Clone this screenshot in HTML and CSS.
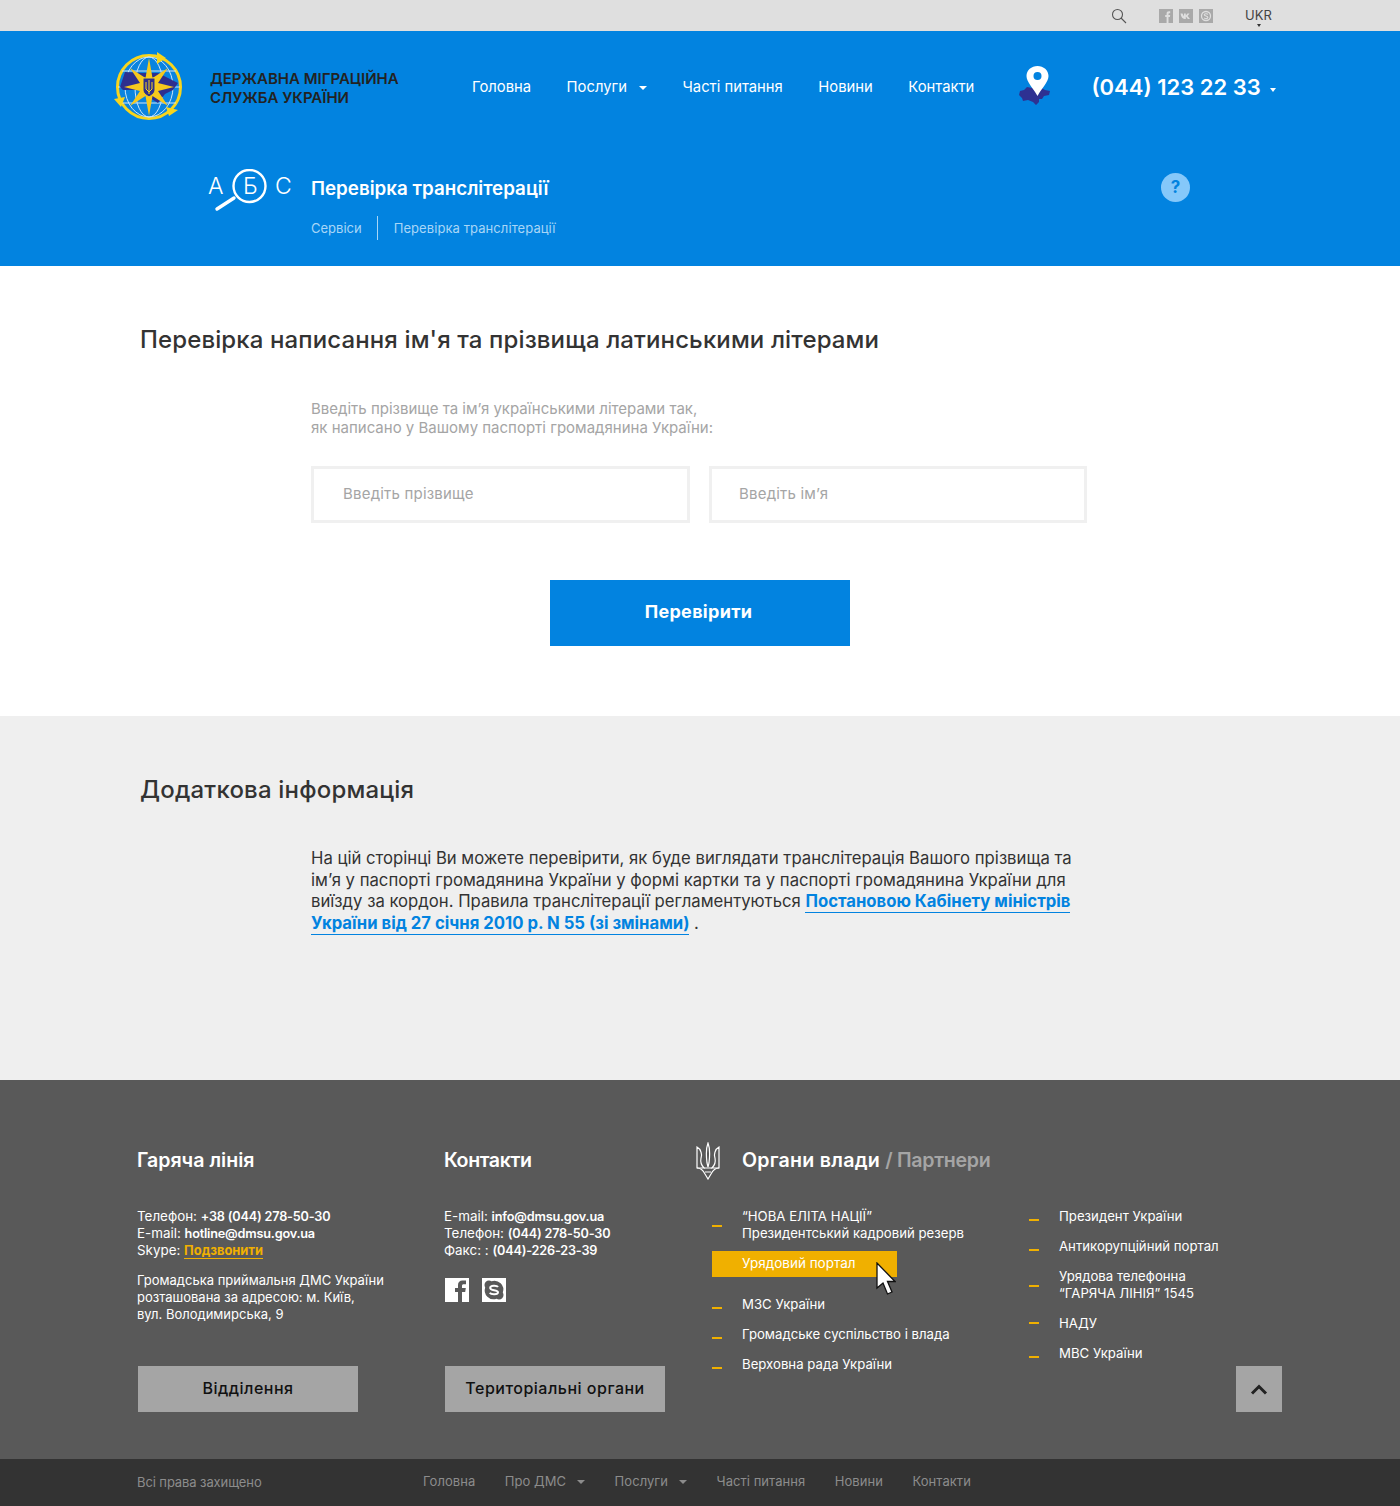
FILE: index.html
```html
<!DOCTYPE html>
<html lang="uk">

<head>
    <meta charset="UTF-8">
    <meta name="viewport" content="width=device-width, initial-scale=1.0">
    <title>Перевірка транслітерації</title>
    <link rel="stylesheet" href="styles.css">
</head>

<body>
    <div class="topbar">
        <svg class="top-search" width="16" height="16" viewBox="0 0 16 16"><circle cx="6.5" cy="6.5" r="5" fill="none" stroke="#555" stroke-width="1.1"/><path d="M10 10l5 5" stroke="#555" stroke-width="1.1"/></svg>
        <div class="top-social">
            <svg width="14" height="14" viewBox="0 0 14 14"><rect width="14" height="14" fill="#a9a9a9"/><path d="M7.6 14V8h-1.4V6h1.4V4.6C7.6 3 8.5 2.2 10 2.2h1.2v2H10.300c-.6 0-.8.300-.8.800V6h1.700l-.3 2H9.500v6z" fill="#dfdfdf"/></svg>
            <svg width="14" height="14" viewBox="0 0 14 14"><rect width="14" height="14" fill="#a9a9a9"/><path d="M1.500 4.500h2l1.500 3V4.500h1.800v2l1.700-2h2L8.600 7l2.400 3H8.900L6.800 7.600V10H5.500C3.500 10 2 7.500 1.500 4.500z" fill="#dfdfdf"/></svg>
            <svg width="14" height="14" viewBox="0 0 14 14"><rect width="14" height="14" fill="#a9a9a9"/><circle cx="7" cy="7" r="4.500" fill="none" stroke="#dfdfdf" stroke-width="1.300"/><path d="M9 5.300C8.300 4.500 5.200 4.500 5.200 5.800S8.900 7 8.900 8.400 5.700 9.700 5 8.700" fill="none" stroke="#dfdfdf" stroke-width="1.100"/></svg>
        </div>
        <div class="top-lang">UKR<span class="lang-caret"></span></div>
    </div>

    <header class="head">
        <div class="head-main">
            <svg class="logo" width="70" height="70" viewBox="0 0 70 70">
                <circle cx="35" cy="35" r="31.500" fill="#0a84e0" stroke="#f7d51d" stroke-width="3"/>
                <g fill="none" stroke="#cfe6f8" stroke-width="1">
                    <ellipse cx="35" cy="35" rx="14" ry="30"/>
                    <ellipse cx="35" cy="35" rx="24" ry="30"/>
                    <path d="M8 19h54M4 35h62M8 51h54"/>
                </g>
                <path d="M6 35l5-15 17 1 16 0 20 10-5 7-8 4-7 9-8-5-10-8-17 0z" fill="#2e2f8e"/>
                <path d="M35 6l3.500 20L54 16 44 31l16 4-16 4 10 15-15.500-10L35 64l-3.500-20L16 54l10-15-16-4 16-4-10-15 15.500 10z" fill="#f7c91d"/>
                <path d="M29 26h12v12c0 3-3 5-6 7-3-2-6-4-6-7z" fill="#2e2f8e" stroke="#f7d51d"/>
                <path d="M35 28v14M32 30v7l3 3 3-3v-7" fill="none" stroke="#f7d51d" stroke-width="1"/>
                <path d="M43 0l9 6-9 6zM0 47l11-2-4 10zM52 55l12 3-9 6z" fill="#f7d51d"/>
            </svg>
            <div class="brand">ДЕРЖАВНА МІГРАЦІЙНА<br>СЛУЖБА УКРАЇНИ</div>
            <nav class="nav">
                <a>Головна</a>
                <a>Послуги<span class="caret"></span></a>
                <a>Часті питання</a>
                <a>Новини</a>
                <a>Контакти</a>
            </nav>
            <svg class="map-pin" width="34" height="40" viewBox="0 0 34 40">
                <path d="M1 25l4-1 3-3 5 1 8-1 5 3 5 1-1 4-5 1-2 3-3 0 0 3-3 3-3-3-5-2-5 1-1-3-3-3z" fill="#2e3192"/>
                <path d="M18.500 0C12.500 0 7.500 4.300 7.500 10c0 6 6.500 12 11 20C23 22 29.500 16 29.500 10 29.500 4.300 24.500 0 18.500 0z" fill="#fff"/>
                <circle cx="18.500" cy="10" r="4" fill="#0283e0"/>
            </svg>
            <div class="phone">(044) 123 22 33<span class="caret"></span></div>
        </div>
        <div class="head-sub">
            <svg class="abc" width="84" height="44" viewBox="0 0 84 44">
                <circle cx="41.500" cy="17" r="16" fill="none" stroke="#fff" stroke-width="2.400"/>
                <path d="M26 29L9 40" stroke="#fff" stroke-width="3.400" stroke-linecap="round"/>
                <text class="abc-letter" x="0" y="25">А</text>
                <text class="abc-letter" x="35" y="25">Б</text>
                <text class="abc-letter" x="67" y="25">С</text>
            </svg>
            <div class="page-title">
                <h1>Перевірка транслітерації</h1>
                <div class="crumbs"><a>Сервіси</a><a class="crumb-last">Перевірка транслітерації</a></div>
            </div>
            <div class="help">?</div>
        </div>
    </header>

    <section class="check">
        <h2>Перевірка написання ім'я та прізвища латинськими літерами</h2>
        <p class="hint">Введіть прізвище та ім’я українськими літерами так,<br>як написано у Вашому паспорті громадянина України:</p>
        <div class="fields">
            <input class="field" type="text" placeholder="Введіть прізвище">
            <input class="field field-name" type="text" placeholder="Введіть ім’я">
        </div>
        <div class="submit-row"><button class="submit" type="button">Перевірити</button></div>
    </section>

    <section class="extra">
        <h2>Додаткова інформація</h2>
        <p>На цій сторінці Ви можете перевірити, як буде виглядати транслітерація Вашого прізвища та ім’я у паспорті громадянина України у формі картки та у паспорті громадянина України для виїзду за кордон. Правила транслітерації регламентуються <a>Постановою Кабінету міністрів України від 27 січня 2010 р. N 55 (зі змінами)</a> .</p>
    </section>

    <footer class="foot">
        <div class="foot-main">
            <div class="col col-hot">
                <h3>Гаряча лінія</h3>
                <p class="lines">Телефон: <b>+38 (044) 278-50-30</b><br>E-mail: <b>hotline@dmsu.gov.ua</b><br>Skype: <a class="call">Подзвонити</a></p>
                <p class="lines addr">Громадська приймальня ДМС України<br>розташована за адресою: м. Київ,<br>вул. Володимирська, 9</p>
                <a class="foot-btn">Відділення</a>
            </div>
            <div class="col col-cont">
                <h3>Контакти</h3>
                <p class="lines">E-mail: <b>info@dmsu.gov.ua</b><br>Телефон: <b>(044) 278-50-30</b><br>Факс: : <b>(044)-226-23-39</b></p>
                <div class="foot-social">
                    <svg width="24" height="24" viewBox="0 0 24 24"><rect width="24" height="24" fill="#fff"/><path d="M13 24V14h-3v-4h3V7c0-3 1.800-4.500 4.400-4.500H21v3.800h-2.300c-1.200 0-1.700.6-1.700 1.700v2h3.800l-.6 4H17v10z" fill="#595959"/></svg>
                    <svg width="24" height="24" viewBox="0 0 24 24"><rect width="24" height="24" fill="#fff"/><path d="M7 2.500a4.500 4.500 0 0 0-4.500 4.500c0 .9.300 1.700.7 2.400A9 9 0 0 0 14.600 20.800c.7.400 1.500.7 2.400.7a4.500 4.500 0 0 0 4.500-4.500c0-.9-.3-1.700-.7-2.400A9 9 0 0 0 9.400 3.200C8.700 2.800 7.900 2.500 7 2.500z" fill="#595959"/><path d="M16 9c-1-1.700-7.800-2-7.800.9 0 3 7.800 1.500 7.800 4.400 0 2.700-7 2.600-8.200.5" fill="none" stroke="#fff" stroke-width="2"/></svg>
                </div>
                <a class="foot-btn">Територіальні органи</a>
            </div>
            <div class="col col-org">
                <div class="org-head">
                    <svg width="26" height="38" viewBox="0 0 26 38" fill="none" stroke="#fff" stroke-width="1.200">
                        <path d="M13 1c-2 5-2 12-1 20l1 4 1-4c1-8 1-15-1-20z"/>
                        <path d="M2 5v21h7c-2-2-4-5-3-10 .5-2 1-3 0-6-.5-2-2-4-4-5zM24 5v21h-7c2-2 4-5 3-10-.5-2-1-3 0-6 .5-2 2-4 4-5z"/>
                        <path d="M2 26c3 0 6 2 8 6l3 5 3-5c2-4 5-6 8-6M9 26h8M10 30h6"/>
                    </svg>
                    <h3>Органи влади <span>/ Партнери</span></h3>
                </div>
                <div class="org-lists">
                    <ul class="org-list">
                        <li class="two">“НОВА ЕЛІТА НАЦІЇ”<br>Президентський кадровий резерв</li>
                        <li class="active">Урядовий портал
                            <svg class="cursor" width="20" height="34" viewBox="0 0 20 34"><path d="M1 1v25l6-5 4.500 11 4.500-2-4.500-10.500H19z" fill="#fff" stroke="#111" stroke-width="1.300"/></svg>
                        </li>
                        <li>МЗС України</li>
                        <li>Громадське суспільство і влада</li>
                        <li>Верховна рада України</li>
                    </ul>
                    <ul class="org-list">
                        <li>Президент України</li>
                        <li>Антикорупційний портал</li>
                        <li class="two">Урядова телефонна<br>“ГАРЯЧА ЛІНІЯ” 1545</li>
                        <li class="up">НАДУ</li>
                        <li>МВС України</li>
                    </ul>
                </div>
            </div>
            <a class="to-top"><svg width="18" height="12" viewBox="0 0 18 12"><path d="M2 10.500l7-7 7 7" fill="none" stroke="#222" stroke-width="3"/></svg></a>
        </div>
        <div class="foot-bottom">
            <span class="rights">Всі права захищено</span>
            <nav class="foot-nav">
                <a>Головна</a>
                <a>Про ДМС<span class="caret"></span></a>
                <a>Послуги<span class="caret"></span></a>
                <a>Часті питання</a>
                <a>Новини</a>
                <a>Контакти</a>
            </nav>
        </div>
    </footer>
</body>

</html>
```

FILE: styles.css
```css
* {
    margin: 0;
    padding: 0;
    box-sizing: border-box;
}

body {
    font-family: "Inter", "Open Sans", sans-serif;
    color: #333;
    background: #fff;
}

h1, h2, h3 {
    font-weight: 600;
}

ul {
    list-style: none;
}

.caret {
    display: inline-block;
    width: 0;
    height: 0;
    margin-left: 12px;
    vertical-align: 2px;
    border-left: 4px solid transparent;
    border-right: 4px solid transparent;
    border-top: 4px solid #fff;
}

/* top bar */
.topbar {
    height: 31px;
    background: #dfdfdf;
    display: flex;
    align-items: center;
    padding-left: 1111px;
}

.top-search {
    margin-right: 32px;
}

.top-social {
    display: flex;
    gap: 6px;
    margin-right: 32px;
}

.top-lang {
    position: relative;
    margin-top: -2px;
    font-size: 13px;
    color: #444;
}

.lang-caret {
    position: absolute;
    left: 12px;
    bottom: -4px;
    border-left: 2px solid transparent;
    border-right: 2px solid transparent;
    border-top: 3px solid #333;
}

/* blue header */
.head {
    height: 235px;
    background: #0283e0;
    color: #fff;
}

.head-main {
    height: 112px;
    display: flex;
    align-items: center;
    padding-left: 114px;
}

.logo {
    margin-top: -1px;
}

.brand {
    width: 262px;
    margin-left: 26px;
    margin-top: 2px;
    font-size: 15px;
    line-height: 19px;
    font-weight: 600;
    color: #222;
}

.nav {
    display: flex;
    gap: 35.500px;
    font-size: 14.800px;
    margin-top: -1px;
}

.map-pin {
    margin-left: 45px;
    margin-top: -3px;
}

.phone {
    margin-left: 38px;
    font-size: 22px;
    font-weight: 600;
    margin-top: -1px;
}

.phone .caret {
    margin-left: 9px;
    vertical-align: 3px;
    border-left-width: 3.500px;
    border-right-width: 3.500px;
}

.head-sub {
    display: flex;
    padding-left: 208px;
}

.abc {
    margin-top: 26px;
}

.abc-letter {
    font-size: 23px;
    font-weight: 300;
    fill: #fff;
}

.page-title {
    margin-left: 19px;
    margin-top: 34px;
    width: 850px;
}

.page-title h1 {
    font-size: 18.800px;
    line-height: 24px;
}

.crumbs {
    display: flex;
    margin-top: 15px;
    font-size: 13px;
    line-height: 24px;
    color: #a8d6f7;
}

.crumbs a:first-child {
    padding-right: 15px;
    margin-right: 16px;
    border-right: 1px solid #a8d6f7;
}

.crumb-last {
    letter-spacing: 0.080px;
}

.help {
    width: 29px;
    height: 29px;
    margin-top: 30px;
    border-radius: 50%;
    background: #85c8fa;
    color: #0283e0;
    font-size: 17px;
    font-weight: 700;
    line-height: 29px;
    text-align: center;
}

/* form */
.check {
    height: 450px;
    padding: 59px 0 0 140px;
}

.check h2, .extra h2 {
    font-size: 24px;
    line-height: 30px;
    font-weight: 500;
    letter-spacing: 0.120px;
    color: #333;
}

.hint {
    margin: 44px 0 0 171px;
    font-size: 15px;
    line-height: 19px;
    color: #a5a5a5;
}

.fields {
    display: flex;
    gap: 19px;
    margin: 29px 0 0 171px;
}

.field {
    width: 379px;
    height: 57px;
    border: 3px solid #f0f0f0;
    padding: 0 0 3px 29px;
    font-family: inherit;
    font-size: 15px;
    letter-spacing: 0.200px;
    outline: none;
}

.field-name {
    width: 378px;
    padding-left: 27px;
}

.field::placeholder {
    color: #a5a5a5;
    opacity: 1;
}

.submit-row {
    margin: 57px 0 0 410px;
}

.submit {
    width: 300px;
    height: 66px;
    padding: 0 3px 4px 0;
    border: 0;
    background: #0283e0;
    color: #fff;
    font-family: inherit;
    font-size: 18px;
    font-weight: 700;
    letter-spacing: 0.300px;
}

/* extra info */
.extra {
    height: 364px;
    padding: 59px 0 0 140px;
    background: #efefef;
}

.extra h2 {
    letter-spacing: 0.200px;
}

.extra p {
    width: 770px;
    margin: 43px 0 0 171px;
    font-size: 16.700px;
    line-height: 21.700px;
    color: #333;
}

.extra p a {
    padding-bottom: 1px;
    color: #0283e0;
    font-weight: 700;
    border-bottom: 1px solid #0283e0;
}

/* footer */
.foot {
    background: #595959;
    color: #fff;
}

.foot-main {
    position: relative;
    height: 379px;
    padding: 65px 0 0 137px;
    display: flex;
}

.foot h3 {
    font-size: 19.600px;
    line-height: 30px;
    font-weight: 600;
}

.lines {
    font-size: 13.400px;
    line-height: 17px;
}

.lines b {
    font-size: 12.700px;
    font-weight: 600;
    letter-spacing: -0.200px;
}

.col-hot {
    width: 307px;
}

.col-hot .lines:nth-of-type(1), .col-cont .lines {
    margin-top: 33px;
}

.addr {
    margin-top: 13px;
}

.lines.addr {
    font-size: 13px;
}

.call {
    font-size: 12.900px;
    color: #f0b000;
    font-weight: 700;
    border-bottom: 1px solid #f0b000;
}

.foot-btn {
    display: block;
    width: 220px;
    height: 46px;
    background: #a5a5a5;
    color: #111;
    font-size: 16px;
    font-weight: 500;
    letter-spacing: 0.500px;
    line-height: 44px;
    text-align: center;
}

.col-hot .foot-btn {
    position: absolute;
    left: 138px;
    top: 286px;
}

.col-cont {
    width: 251px;
}

.col-cont h3 {
    letter-spacing: -0.400px;
}

.col-cont .foot-btn {
    position: absolute;
    left: 445px;
    top: 286px;
}

.foot-social {
    display: flex;
    gap: 13px;
    margin: 19px 0 0 1px;
}

.org-head {
    display: flex;
    align-items: center;
    gap: 21px;
    margin-top: -3px;
}

.org-head h3 {
    margin-top: -2px;
    letter-spacing: 0.250px;
}

.org-head h3 span {
    color: #a5a5a5;
    letter-spacing: -0.300px;
}

.org-lists {
    display: flex;
    margin: 28px 0 0 17px;
}

.org-list {
    width: 317px;
    font-size: 13.200px;
    line-height: 17px;
}

.org-list li {
    position: relative;
    padding-left: 30px;
    margin-bottom: 13px;
}

.org-list li::before {
    content: "";
    position: absolute;
    left: 0;
    top: 11px;
    width: 10px;
    height: 2px;
    background: #f0b000;
}

.org-list li.two::before {
    top: 17px;
}

.org-list li.up::before {
    top: 7px;
}

.org-list li.two:first-child {
    margin-bottom: 9px;
}

.org-list li.active {
    width: 185px;
    height: 26px;
    font-size: 13.500px;
    line-height: 25px;
    margin-bottom: 19px;
    background: #f0b000;
}

.org-list li.active::before {
    display: none;
}

.cursor {
    position: absolute;
    left: 164px;
    top: 11px;
}

.to-top {
    position: absolute;
    left: 1236px;
    top: 286px;
    width: 46px;
    height: 46px;
    background: #a5a5a5;
    display: flex;
    align-items: center;
    justify-content: center;
}

.foot-bottom {
    height: 47px;
    background: #333;
    display: flex;
    align-items: center;
    padding-left: 137px;
    font-size: 13px;
    color: #8c8c8c;
}

.rights {
    width: 286px;
    letter-spacing: -0.100px;
    margin-top: -1px;
}

.foot-nav {
    display: flex;
    gap: 29.500px;
    letter-spacing: 0.050px;
    margin-top: -3px;
}

.foot-nav .caret {
    border-top-color: #8c8c8c;
    margin-left: 11px;
}
```
